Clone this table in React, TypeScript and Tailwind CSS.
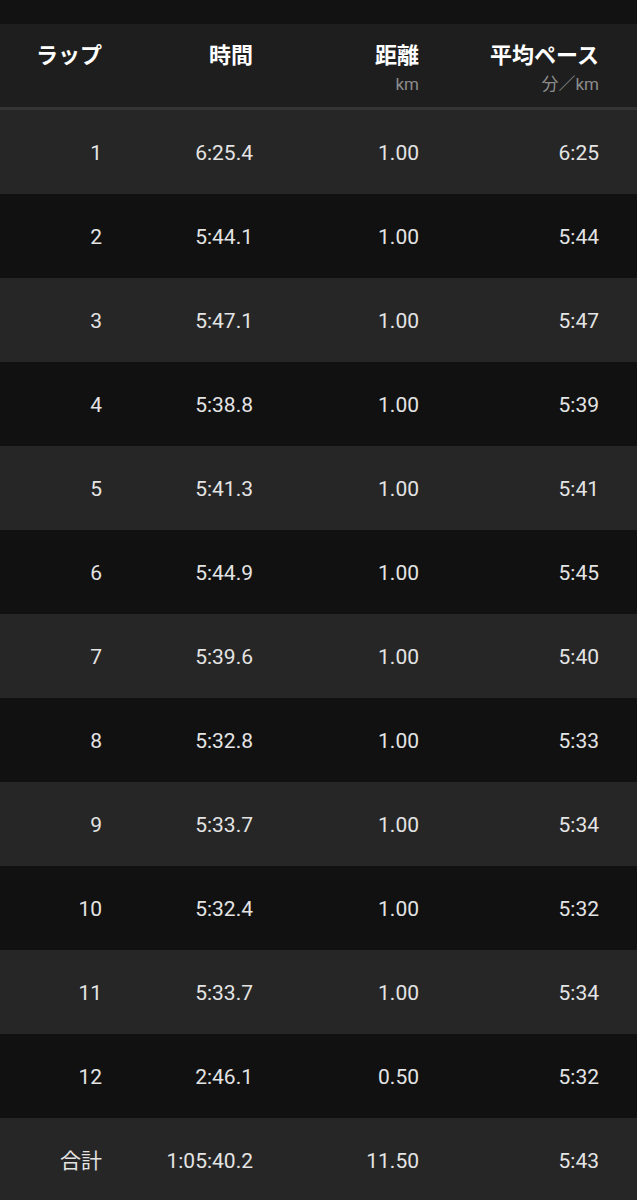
const laps = [
  ["1", "6:25.4", "1.00", "6:25"],
  ["2", "5:44.1", "1.00", "5:44"],
  ["3", "5:47.1", "1.00", "5:47"],
  ["4", "5:38.8", "1.00", "5:39"],
  ["5", "5:41.3", "1.00", "5:41"],
  ["6", "5:44.9", "1.00", "5:45"],
  ["7", "5:39.6", "1.00", "5:40"],
  ["8", "5:32.8", "1.00", "5:33"],
  ["9", "5:33.7", "1.00", "5:34"],
  ["10", "5:32.4", "1.00", "5:32"],
  ["11", "5:33.7", "1.00", "5:34"],
  ["12", "2:46.1", "0.50", "5:32"],
  ["合計", "1:05:40.2", "11.50", "5:43"],
]

const grid = "grid grid-cols-[102px_151px_166px_180px] text-right"

export default function App() {
  return (
    <div
      className="w-[637px] h-[1200px] overflow-hidden bg-[#121212]"
      style={{ fontFamily: 'Roboto, "Noto Sans CJK JP", sans-serif' }}
    >
      <div className="h-6 bg-[#121212]" />

      {/* header */}
      <div className={`${grid} h-[83px] bg-[#1e1e1e] pt-[18px]`}>
        <div className="text-[22px] leading-7 font-bold text-white">ラップ</div>
        <div className="text-[22px] leading-7 font-bold text-white">時間</div>
        <div>
          <div className="text-[22px] leading-7 font-bold text-white">距離</div>
          <div className="mt-[4px] text-[17px] leading-5 text-[#8c8c8c]">km</div>
        </div>
        <div>
          <div className="text-[22px] leading-7 font-bold text-white">平均ペース</div>
          <div className="mt-[4px] text-[17px] leading-5 text-[#8c8c8c]">分／km</div>
        </div>
      </div>
      <div className="h-[3px] bg-[#343434]" />

      {/* rows */}
      {laps.map((row, i) => (
        <div
          key={i}
          className={`${grid} h-[84px] items-center pt-[3px] text-[21px] text-[#e4e4e4] ${
            i % 2 === 0 ? "bg-[#262626]" : "bg-[#111111]"
          }`}
        >
          {row.map((cell, j) => (
            <div key={j}>{cell}</div>
          ))}
        </div>
      ))}
    </div>
  )
}
